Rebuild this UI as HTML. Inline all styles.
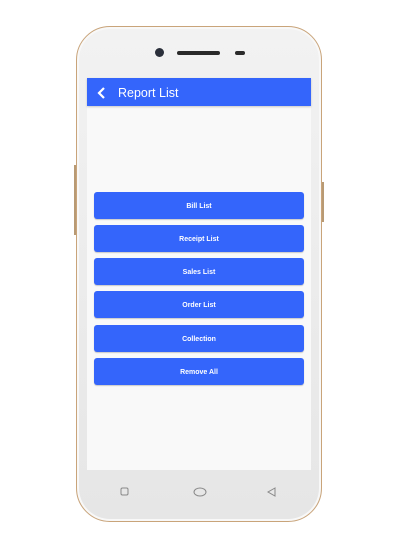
<!DOCTYPE html>
<html><head><style>
*{margin:0;padding:0;box-sizing:border-box}
body{width:400px;height:550px;background:#fff;position:relative;overflow:hidden;font-family:"Liberation Sans",sans-serif}
.phone{position:absolute;left:76px;top:26px;width:246px;height:496px;border-radius:34px;background:linear-gradient(#f2f2f2,#ececec 50%,#e6e6e6);border:1.5px solid #c9a47a;box-shadow:inset 0 0 0 2px #f8f8f8}
.sb{position:absolute;width:1.5px;background:#b89a74}
.screen{position:absolute;left:87px;top:78px;width:224px;height:392px;background:#f9f9f9}
.hdr{height:28px;background:#3465fb;color:#fff;font-size:12.5px;line-height:30px;padding-left:31px;position:relative;box-shadow:0 1px 2px rgba(0,0,0,.2)}
.hdr svg{position:absolute;left:10px;top:9px}
.btn{position:absolute;left:7px;width:210px;height:27px;background:#3465fb;border-radius:3px;color:#fff;font-size:7px;font-weight:bold;text-align:center;line-height:29px;box-shadow:0 1px 1px rgba(0,0,0,.2)}
</style></head><body>
<div class="sb" style="left:74px;top:165px;height:70px"></div>
<div class="sb" style="left:322px;top:182px;height:40px"></div>
<div class="phone"></div>
<div style="position:absolute;left:155px;top:48px;width:9px;height:9px;border-radius:50%;background:#2a2f3a"></div>
<div style="position:absolute;left:177px;top:51px;width:43px;height:4px;border-radius:2px;background:#2a2a2a"></div>
<div style="position:absolute;left:235px;top:51px;width:10px;height:4px;border-radius:2px;background:#2a2a2a"></div>
<div class="screen">
<div class="hdr"><svg width="10" height="12" viewBox="0 0 10 12"><path d="M7 1L2 6l5 5" stroke="#fff" stroke-width="2.2" fill="none"/></svg>Report List</div>
<div class="btn" style="top:114px">Bill List</div>
<div class="btn" style="top:147px">Receipt List</div>
<div class="btn" style="top:180px">Sales List</div>
<div class="btn" style="top:213px">Order List</div>
<div class="btn" style="top:247px">Collection</div>
<div class="btn" style="top:280px">Remove All</div>
</div>
<svg style="position:absolute;left:0;top:0" width="400" height="550">
<rect x="121" y="488" width="7" height="7" rx="1.5" fill="none" stroke="#888" stroke-width="1"/>
<ellipse cx="200" cy="492" rx="6" ry="4" fill="none" stroke="#888" stroke-width="1"/>
<path d="M275 488L268 492L275 496Z" fill="none" stroke="#888" stroke-width="1"/>
</svg>
</body></html>
